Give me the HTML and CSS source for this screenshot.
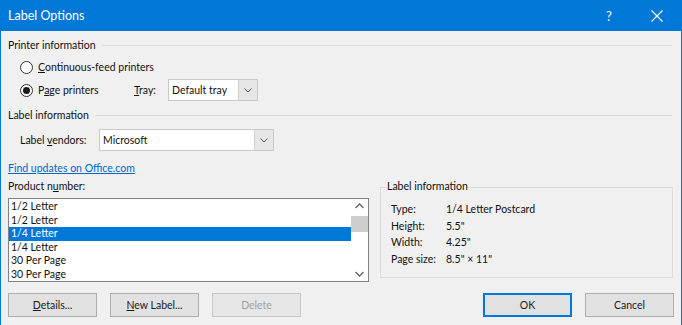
FILE: index.html
```html
<!DOCTYPE html>
<html lang="en">
<head>
  <meta charset="UTF-8">
  <title>Label Options</title>
  <link rel="stylesheet" href="styles.css">
</head>
<body>
  <div class="window">
    <div class="titlebar">
      <div class="title">Label Options</div>
      <div class="help">?</div>
      <div class="close">
        <svg width="12" height="12" viewBox="0 0 12 12"><path d="M0.5 0.5 L11.5 11.5 M11.5 0.5 L0.5 11.5" stroke="#fff" stroke-width="1.2"/></svg>
      </div>
    </div>
    <div class="content">
      <div class="group-head">Printer information</div>
      <div class="radio-row first">
        <span class="radio"></span><span><u>C</u>ontinuous-feed printers</span>
      </div>
      <div class="radio-row">
        <span class="radio checked"></span><span class="page-label">P<u>a</u>ge printers</span>
        <span class="tray-label"><u>T</u>ray:</span>
        <div class="combo tray">
          <span class="combo-text">Default tray</span>
          <span class="combo-btn"><svg width="8" height="5" viewBox="0 0 8 5"><path d="M0.5 0.5 L4 4 L7.5 0.5" fill="none" stroke="#555" stroke-width="1"/></svg></span>
        </div>
      </div>

      <div class="group-head second">Label information</div>
      <div class="vendor-row">
        <span class="vendor-label">Label <u>v</u>endors:</span>
        <div class="combo vendor">
          <span class="combo-text">Microsoft</span>
          <span class="combo-btn"><svg width="8" height="5" viewBox="0 0 8 5"><path d="M0.5 0.5 L4 4 L7.5 0.5" fill="none" stroke="#555" stroke-width="1"/></svg></span>
        </div>
      </div>
      <a class="link" href="#">Find updates on Office.com</a>

      <div class="lower">
        <div class="product">
          <div class="product-label">Product n<u>u</u>mber:</div>
          <div class="listbox">
            <div class="items">
              <div class="item">1/2 Letter</div>
              <div class="item">1/2 Letter</div>
              <div class="item selected">1/4 Letter</div>
              <div class="item">1/4 Letter</div>
              <div class="item">30 Per Page</div>
              <div class="item">30 Per Page</div>
            </div>
            <div class="scrollbar">
              <svg class="arrow" width="9" height="6" viewBox="0 0 9 6"><path d="M0.5 5 L4.5 1 L8.5 5" fill="none" stroke="#606060" stroke-width="1.3"/></svg>
              <div class="thumb"></div>
              <div class="track"></div>
              <svg class="arrow" width="9" height="6" viewBox="0 0 9 6"><path d="M0.5 1 L4.5 5 L8.5 1" fill="none" stroke="#606060" stroke-width="1.3"/></svg>
            </div>
          </div>
        </div>
        <fieldset class="info">
          <legend>Label information</legend>
          <div class="info-row"><span class="key">Type:</span><span>1/4 Letter Postcard</span></div>
          <div class="info-row"><span class="key">Height:</span><span>5.5"</span></div>
          <div class="info-row"><span class="key">Width:</span><span>4.25"</span></div>
          <div class="info-row"><span class="key">Page size:</span><span>8.5" × 11"</span></div>
        </fieldset>
      </div>

      <div class="buttons">
        <button class="btn"><u>D</u>etails...</button>
        <button class="btn"><u>N</u>ew Label...</button>
        <button class="btn disabled">Delete</button>
        <div class="spacer"></div>
        <button class="btn default">OK</button>
        <button class="btn">Cancel</button>
      </div>
    </div>
  </div>
</body>
</html>
```

FILE: styles.css
```css
body {
  margin: 0;
  font-family: "Segoe UI", Lato, "Noto Sans", sans-serif;
  font-size: 10.5px;
  color: #111;
  background: #f0f0f0;
}
u {
  text-decoration: underline;
  text-underline-offset: 1px;
}
.window {
  height: 325px;
  border-left: 1px solid #0078d7;
  border-right: 1px solid #0078d7;
  box-sizing: border-box;
  background: #f0f0f0;
}
.titlebar {
  height: 31px;
  background: #0078d7;
  color: #fff;
  display: flex;
  align-items: center;
}
.title {
  flex: 1;
  font-size: 12.5px;
  padding-left: 7px;
}
.help {
  width: 48px;
  text-align: center;
  font-size: 13px;
}
.close {
  width: 48px;
  display: flex;
  justify-content: center;
}
.content {
  padding: 0 7px;
}
.group-head {
  display: flex;
  align-items: center;
  gap: 6px;
  height: 16px;
  margin-top: 6px;
}
.group-head::after {
  content: "";
  flex: 1;
  border-top: 1px solid #dcdcdc;
  margin-right: 2px;
}
.group-head.second {
  margin-top: 6px;
}
.radio-row {
  display: flex;
  align-items: center;
  height: 22px;
  padding-left: 12px;
}
.radio-row.first {
  margin-top: 3px;
  margin-bottom: 1px;
}
.radio {
  width: 11px;
  height: 11px;
  border: 1px solid #333;
  border-radius: 50%;
  background: #fff;
  margin-right: 5px;
  display: flex;
  align-items: center;
  justify-content: center;
}
.radio.checked::after {
  content: "";
  width: 7px;
  height: 7px;
  border-radius: 50%;
  background: #1a1a1a;
}
.page-label {
  width: 96px;
}
.tray-label {
  width: 34px;
}
.combo {
  display: flex;
  height: 22px;
  box-sizing: border-box;
  border: 1px solid #c9c9c9;
  background: #fff;
}
.combo-text {
  flex: 1;
  padding-left: 3px;
  display: flex;
  align-items: center;
}
.combo-btn {
  width: 18px;
  background: #e6e6e6;
  border-left: 1px solid #d0d0d0;
  display: flex;
  align-items: center;
  justify-content: center;
}
.tray {
  width: 90px;
}
.vendor-row {
  display: flex;
  align-items: center;
  margin-top: 6px;
  padding-left: 12px;
}
.vendor-label {
  width: 79px;
}
.vendor {
  width: 175px;
}
.link {
  display: block;
  margin-top: 11px;
  color: #0066cc;
  height: 15px;
}
.lower {
  display: flex;
  margin-top: 3px;
}
.product {
  width: 361px;
}
.product-label {
  height: 15px;
}
.listbox {
  display: flex;
  height: 84px;
  margin-top: 3px;
  border: 1px solid #828282;
  background: #fff;
  box-sizing: border-box;
}
.items {
  flex: 1;
  padding-top: 1px;
}
.item {
  height: 13.6px;
  line-height: 13.6px;
  padding-left: 2px;
}
.item.selected {
  background: #0078d7;
  color: #fff;
}
.scrollbar {
  width: 17px;
  display: flex;
  flex-direction: column;
  align-items: center;
  background: #fff;
}
.arrow {
  margin: 4px 0;
}
.thumb {
  width: 17px;
  height: 16px;
  background: #cdcdcd;
  margin-top: 3px;
}
.track {
  flex: 1;
}
.info {
  flex: 1;
  margin: 0 1px 0 11px;
  padding: 6px 0 0 10px;
  border: 1px solid #dcdcdc;
  height: 98px;
  box-sizing: border-box;
  min-width: 0;
}
.info legend {
  padding: 0;
  margin-left: -4px;
  height: 15px;
}
.info-row {
  display: flex;
  height: 16.5px;
  line-height: 16px;
}
.key {
  width: 55px;
}
.buttons {
  display: flex;
  gap: 13px;
  margin-top: 11px;
}
.btn {
  width: 89px;
  height: 24px;
  font: inherit;
  color: #1a1a1a;
  background: #e1e1e1;
  border: 1px solid #adadad;
  padding: 0;
}
.btn.disabled {
  color: #a0a0a0;
  background: #e6e6e6;
  border-color: #c8c8c8;
}
.btn.default {
  border: 2px solid #0078d7;
}
.spacer {
  flex: 1;
}
```
